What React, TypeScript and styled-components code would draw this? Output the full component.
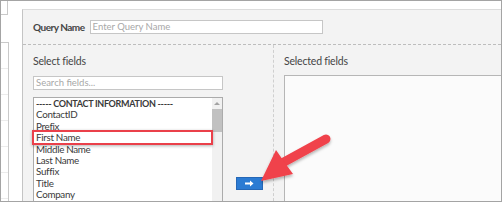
import * as React from 'react'
import styled, { createGlobalStyle } from 'styled-components'

const GlobalStyle = createGlobalStyle`
  html, body {
    margin: 0;
    padding: 0;
    background: #fff;
    overflow: hidden;
  }
  * {
    box-sizing: border-box;
  }
`

const Frame = styled.div`
  position: relative;
  width: 502px;
  height: 202px;
  border: 1px solid #a4a4a4;
  background: #fff;
  display: flex;
  overflow: hidden;
  font-family: Lato, "Open Sans", sans-serif;
  color: #3c3c3c;
`

const LeftStrip = styled.div`
  width: 21px;
  flex: none;
  display: flex;
  flex-direction: column;
`

const StripTab = styled.div`
  width: 7px;
  height: 14px;
  border-right: 1px solid #c9c9c9;
  border-bottom: 1px solid #c9c9c9;
`

const StripBlock = styled.div`
  width: 8px;
  margin-top: 27px;
  flex: 1;
  border-top: 1px solid #c9c9c9;
  border-right: 1px solid #c9c9c9;
`

const StripRow = styled.div`
  height: 26px;
  border-bottom: 1px solid #ececec;
`

const Panel = styled.div`
  flex: 1;
  margin-top: 8px;
  display: flex;
  flex-direction: column;
  background: #f3f3f3;
  border-left: 1px solid #c4c4c4;
  border-top: 1px solid #dcdcdc;
  min-width: 0;
`

const Header = styled.div`
  height: 35px;
  flex: none;
  display: flex;
  align-items: center;
  padding: 0 0 1px 10px;
  border-bottom: 1px dashed #bdbdbd;
`

const Label = styled.span`
  font-size: 10px;
  font-weight: 700;
  color: #454545;
  letter-spacing: -0.5px;
`

const TextBox = styled.div<{ $width: number }>`
  width: ${p => p.$width}px;
  height: 14px;
  background: #fff;
  border: 1px solid #c6c6c6;
  font-size: 9.5px;
  line-height: 12px;
  padding-left: 2px;
  color: #a8a8a8;
  white-space: nowrap;
  overflow: hidden;
`

const QueryBox = styled(TextBox)`
  margin-left: 5px;
`

const Body = styled.div`
  flex: 1;
  display: flex;
  min-height: 0;
`

const FieldsColumn = styled.div`
  width: 251px;
  flex: none;
  display: flex;
  padding-left: 10px;
  border-right: 1px dashed #cfcfcf;
`

const Stack = styled.div`
  width: 190px;
  flex: none;
  display: flex;
  flex-direction: column;
  padding-top: 9px;
`

const ColTitle = styled.div`
  font-size: 10.5px;
  line-height: 14px;
  color: #454545;
  letter-spacing: -0.2px;
  height: 14px;
`

const SearchBox = styled(TextBox)`
  margin-top: 8px;
`

const ListBox = styled.div`
  margin-top: 7px;
  flex: 1;
  background: #fff;
  border: 1px solid #ababab;
  border-bottom: none;
  display: flex;
  overflow: hidden;
`

const Items = styled.div`
  flex: 1;
  padding: 0 0 0 2px;
`

const Item = styled.div<{ $group?: boolean }>`
  font-size: ${p => (p.$group ? '9px' : '9.8px')};
  line-height: 11.4px;
  height: 11.4px;
  white-space: nowrap;
  color: #3a3a3a;
  font-weight: ${p => (p.$group ? 700 : 400)};
  letter-spacing: -0.3px;
`

const ScrollBar = styled.div`
  width: 10px;
  flex: none;
  background: #f1f1f1;
  display: flex;
  flex-direction: column;
  align-items: center;
`

const ScrollArrow = styled.div`
  margin-top: 4px;
  width: 0;
  height: 0;
  border-left: 3px solid transparent;
  border-right: 3px solid transparent;
  border-bottom: 3px solid #a3a3a3;
`

const ScrollThumb = styled.div`
  margin-top: 4px;
  width: 10px;
  height: 23px;
  background: #c1c1c1;
`

const ButtonSlot = styled.div`
  flex: 1;
  display: flex;
  align-items: flex-end;
  padding: 0 0 11px 13px;
`

const MoveButton = styled.button`
  width: 27px;
  height: 13px;
  padding: 0;
  border: 1px solid #2567b6;
  background: #2b7bd3;
  display: flex;
  align-items: center;
  justify-content: center;
`

const SelectedColumn = styled.div`
  flex: 1;
  display: flex;
  flex-direction: column;
  padding: 9px 0 0 10px;
  min-width: 0;
`

const SelectedBox = styled.div`
  margin-top: 7px;
  flex: 1;
  width: calc(100% + 10px);
  background: #fbfbfb;
  border: 1px solid #b6b6b6;
  border-bottom: none;
`

const Highlight = styled.div`
  position: absolute;
  left: 31px;
  top: 129px;
  width: 181px;
  height: 15px;
  border: 2px solid #ea404a;
  box-shadow: 0 1px 3px rgba(0, 0, 0, 0.3);
`

const Overlay = styled.svg`
  position: absolute;
  left: -1px;
  top: -1px;
  pointer-events: none;
`

const fields = [
  'ContactID',
  'Prefix',
  'First Name',
  'Middle Name',
  'Last Name',
  'Suffix',
  'Title',
  'Company',
]

const ArrowIcon = () => (
  <svg width="9" height="7" viewBox="0 0 9 7">
    <path d="M0 2.5 H5 V0.5 L8.5 3.5 L5 6.5 V4.5 H0 Z" fill="#fff" />
  </svg>
)

export default function App() {
  return (
    <>
      <GlobalStyle />
      <Frame>
        <LeftStrip>
          <StripTab />
          <StripBlock>
            {[0, 1, 2, 3, 4, 5].map(i => (
              <StripRow key={i} />
            ))}
          </StripBlock>
        </LeftStrip>
        <Panel>
          <Header>
            <Label>Query Name</Label>
            <QueryBox $width={233}>Enter Query Name</QueryBox>
          </Header>
          <Body>
            <FieldsColumn>
              <Stack>
                <ColTitle>Select fields</ColTitle>
                <SearchBox $width={190}>Search fields...</SearchBox>
                <ListBox>
                  <Items>
                    <Item $group>----- CONTACT INFORMATION -----</Item>
                    {fields.map(f => (
                      <Item key={f}>{f}</Item>
                    ))}
                  </Items>
                  <ScrollBar>
                    <ScrollArrow />
                    <ScrollThumb />
                  </ScrollBar>
                </ListBox>
              </Stack>
              <ButtonSlot>
                <MoveButton>
                  <ArrowIcon />
                </MoveButton>
              </ButtonSlot>
            </FieldsColumn>
            <SelectedColumn>
              <ColTitle>Selected fields</ColTitle>
              <SelectedBox />
            </SelectedColumn>
          </Body>
        </Panel>
        <Highlight />
        <Overlay width="502" height="202" viewBox="0 0 502 202">
          <defs>
            <filter id="shadow" x="-20%" y="-20%" width="140%" height="140%">
              <feDropShadow dx="0" dy="2" stdDeviation="1.5" floodColor="#000" floodOpacity="0.3" />
            </filter>
          </defs>
          <g fill="#f0424b" filter="url(#shadow)">
            <line x1="326" y1="139" x2="284" y2="162" stroke="#f0424b" strokeWidth="9" strokeLinecap="round" />
            <path d="M261 181 L276 150 L285 163 L293 174 Z" />
          </g>
        </Overlay>
      </Frame>
    </>
  )
}
